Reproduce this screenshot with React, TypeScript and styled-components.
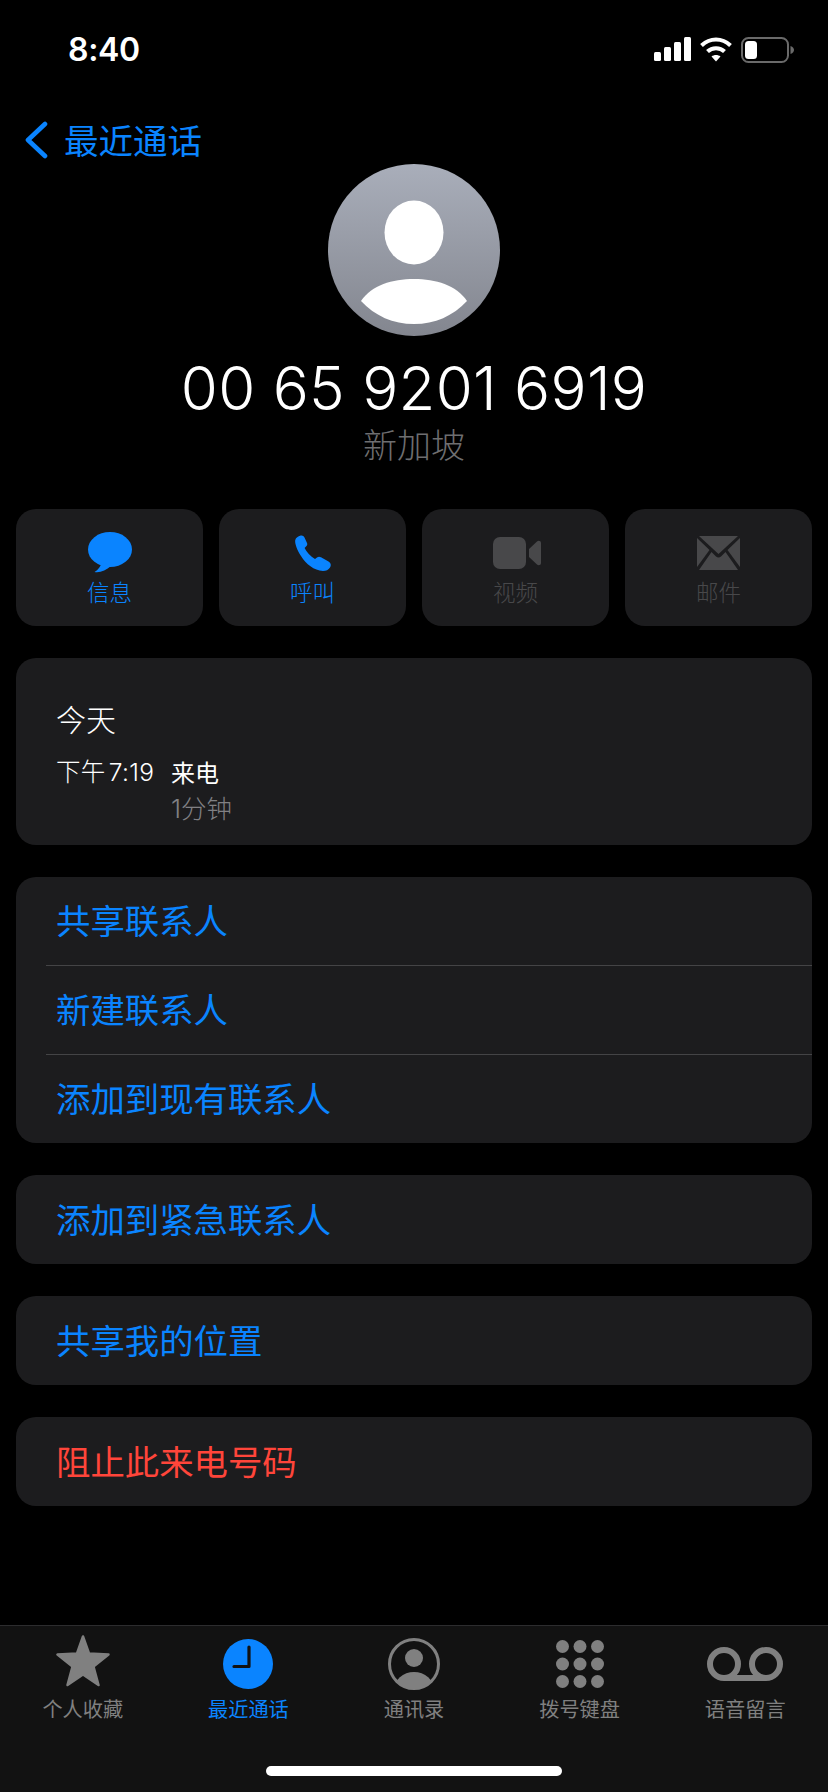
import React from "react";
import styled, { createGlobalStyle } from "styled-components";

const Global = createGlobalStyle`
  html, body { margin: 0; padding: 0; background: #000; }
  body { font-family: Inter, "Noto Sans CJK SC", sans-serif; }
  * { box-sizing: border-box; }
`;

const Page = styled.div`
  width: 828px;
  height: 1792px;
  background: #000;
  display: flex;
  flex-direction: column;
  overflow: hidden;
`;

const StatusBar = styled.div`
  height: 100px;
  padding: 37px 34px 0 68px;
  display: flex;
  align-items: flex-start;
  justify-content: space-between;
`;

const Time = styled.div`
  color: #fff;
  font: 600 32px/25px Inter, sans-serif;
  letter-spacing: -0.3px;
`;

const StatusIcons = styled.div`
  display: flex;
  align-items: flex-start;
  gap: 9px;
`;

const NavBar = styled.div`
  height: 64px;
  padding: 21px 0 0 24px;
  display: flex;
  align-items: flex-start;
  gap: 16px;
`;

const BackLabel = styled.span`
  color: #0a84ff;
  font: 400 34.5px/36px "Noto Sans CJK SC", sans-serif;
`;

const Hero = styled.div`
  display: flex;
  flex-direction: column;
  align-items: center;
`;

const Avatar = styled.svg`
  display: block;
  width: 172px;
  height: 172px;
`;

const PhoneNumber = styled.div`
  margin-top: 22px;
  color: #fff;
  font: 300 60px/60px Inter, sans-serif;
  letter-spacing: 0.3px;
`;

const Region = styled.div`
  margin-top: 6px;
  color: #6e6e70;
  font: 300 34px/40px "Noto Sans CJK SC", sans-serif;
`;

const Content = styled.div`
  padding: 0 16px;
  display: flex;
  flex-direction: column;
  gap: 32px;
  margin-top: 45px;
`;

const Actions = styled.div`
  display: grid;
  grid-template-columns: repeat(4, 187px);
  gap: 16px;
`;

const Action = styled.div<{ $on?: boolean }>`
  height: 117px;
  border-radius: 20px;
  background: #1c1c1e;
  display: flex;
  flex-direction: column;
  align-items: center;
  color: ${(p) => (p.$on ? "#0a84ff" : "#48484a")};
`;

const ActionIcon = styled.div<{ $nudge?: number }>`
  height: 67px;
  display: flex;
  align-items: center;
  justify-content: center;
  padding-top: 20px;
  padding-left: ${(p) => p.$nudge ?? 0}px;
`;

const ActionLabel = styled.span`
  font: 300 22.5px/30px "Noto Sans CJK SC", sans-serif;
`;

const Card = styled.div`
  background: #1c1c1e;
  border-radius: 20px;
  overflow: hidden;
`;

const LogCard = styled(Card)`
  height: 187px;
  padding: 40px 40px 0;
`;

const LogDay = styled.div`
  color: #fff;
  font: 300 30px/40px "Noto Sans CJK SC", sans-serif;
  margin-bottom: 16px;
`;

const LogRow = styled.div`
  display: grid;
  grid-template-columns: 115px 1fr;
`;

const LogTime = styled.div`
  color: #fff;
  font: 300 24.5px/36px Inter, "Noto Sans CJK SC", sans-serif;
  white-space: nowrap;
  word-spacing: -4px;
  letter-spacing: 0.3px;
`;

const LogKind = styled.div`
  color: #fff;
  font: 400 24px/35px "Noto Sans CJK SC", sans-serif;
`;

const LogLength = styled.div`
  grid-column: 2;
  color: #808084;
  font: 300 25.5px/37px Inter, "Noto Sans CJK SC", sans-serif;
`;

const Row = styled.div`
  padding-left: 30px;
`;

const RowInner = styled.div<{ $sep?: boolean; $lead?: boolean; $danger?: boolean }>`
  height: ${(p) => (p.$lead ? "88px" : "89px")};
  padding: 0 0 4px 10px;
  display: flex;
  align-items: center;
  border-top: ${(p) => (p.$sep ? "1px solid #444446" : "none")};
  color: ${(p) => (p.$danger ? "#ff453a" : "#0a84ff")};
  font: 400 34.4px/40px "Noto Sans CJK SC", sans-serif;
`;

const TabBar = styled.div`
  margin-top: auto;
  height: 167px;
  background: #121212;
  border-top: 1px solid #2c2c2e;
  display: grid;
  grid-template-columns: repeat(5, 1fr);
  position: relative;
`;

const Tab = styled.div<{ $on?: boolean }>`
  display: flex;
  flex-direction: column;
  align-items: center;
  color: ${(p) => (p.$on ? "#0a84ff" : "#808080")};
`;

const TabIcon = styled.div<{ $top: number }>`
  height: 70px;
  padding-top: ${(p) => p.$top}px;
  display: flex;
  align-items: flex-start;
  justify-content: center;
`;

const TabLabel = styled.span`
  font: 400 20.2px/26px "Noto Sans CJK SC", sans-serif;
`;

const HomeIndicator = styled.div`
  position: absolute;
  left: 266px;
  bottom: 16px;
  width: 296px;
  height: 10px;
  border-radius: 5px;
  background: #fff;
`;

const Back = () => (
  <svg width="24" height="38" viewBox="0 0 24 38" fill="none">
    <path d="M21 3 L4 19 L21 35" stroke="#0a84ff" strokeWidth="4.6" strokeLinecap="round" strokeLinejoin="round" />
  </svg>
);

const Signal = () => (
  <svg width="37" height="24" viewBox="0 0 37 24" fill="#fff">
    <rect x="0" y="15" width="7" height="9" rx="1.5" />
    <rect x="10" y="10" width="7" height="14" rx="1.5" />
    <rect x="20" y="5" width="7" height="19" rx="1.5" />
    <rect x="30" y="0" width="7" height="24" rx="1.5" />
  </svg>
);

const Wifi = () => (
  <svg width="32" height="25" viewBox="0 0 32 25" fill="none" stroke="#fff" strokeWidth="4">
    <path d="M1.5 8.5 C10 .5 22 .5 30.5 8.5" />
    <path d="M7.5 14.5 C12 10 20 10 24.5 14.5" />
    <path d="M16 24.5 L11.5 19.5 C14 17.5 18 17.5 20.5 19.5 Z" fill="#fff" stroke="none" />
  </svg>
);

const Battery = () => (
  <svg width="53" height="26" viewBox="0 0 53 26" fill="none">
    <rect x="1" y="1" width="46" height="24" rx="6.5" stroke="#6a6a6a" strokeWidth="2" />
    <rect x="4" y="4" width="12" height="18" rx="3.5" fill="#fff" />
    <path d="M49.5 9 C52 10 53 11.5 53 13 C53 14.5 52 16 49.5 17 Z" fill="#6a6a6a" />
  </svg>
);

const AvatarArt = () => (
  <Avatar viewBox="0 0 172 172">
    <defs>
      <linearGradient id="avatarFill" x1="0" y1="0" x2="0" y2="1">
        <stop offset="0" stopColor="#a9aeba" />
        <stop offset="1" stopColor="#83868f" />
      </linearGradient>
    </defs>
    <circle cx="86" cy="86" r="86" fill="url(#avatarFill)" />
    <ellipse cx="86" cy="68.5" rx="29.5" ry="32" fill="#fff" />
    <path d="M33 137 C44 121 64 115 86 115 C108 115 128 121 139 137 C125 152 107 160 86 160 C65 160 47 152 33 137 Z" fill="#fff" />
  </Avatar>
);

const Bubble = () => (
  <svg width="44" height="41" viewBox="0 0 44 41" fill="currentColor">
    <ellipse cx="22" cy="17.5" rx="22" ry="17.5" />
    <path d="M14 30 C13 34 10 38 6.5 40 C12 41 18 38.5 23 34 Z" />
  </svg>
);

const Handset = () => (
  <svg width="36" height="36" viewBox="0 0 36 36" fill="currentColor">
    <path d="M5 .8 C7 0 8.6 .6 9.5 2.5 L12 8 C12.6 9.5 12 10.6 11 11.5 L9.6 13 C11.5 17 15.5 21.5 20 24 L22 22.5 C23.3 21.5 24.5 21.5 26 22.3 L33.5 26.5 C35.7 28 36.5 30 35 32.5 C33.5 35 31 36 28 36 C19 35.5 11 29 6 21 C2 15 -.5 8 .3 5 C.8 3 2.5 1.6 5 .8 Z" />
  </svg>
);

const Camera = () => (
  <svg width="48" height="32" viewBox="0 0 48 32" fill="currentColor">
    <rect x="0" y="0" width="33" height="32" rx="7" />
    <path d="M36 12 L44 4.5 C45.5 3 48 3.8 48 6 L48 26 C48 28.2 45.5 29 44 27.5 L36 20 Z" />
  </svg>
);

const Envelope = () => (
  <svg width="43" height="34" viewBox="0 0 43 34">
    <path d="M2 0 H41 L21.5 18 Z" fill="currentColor" />
    <path d="M0 2 L12.5 14 L0 31 Z" fill="currentColor" />
    <path d="M43 2 L30.5 14 L43 31 Z" fill="currentColor" />
    <path d="M2 34 L14.5 16 L19 20.5 C20.5 21.8 22.5 21.8 24 20.5 L28.5 16 L41 34 Z" fill="currentColor" />
  </svg>
);

const Star = () => (
  <svg width="54" height="52" viewBox="0 0 54 52" fill="currentColor" stroke="currentColor" strokeWidth="2.5" strokeLinejoin="round">
    <path d="M27 1.5 L33 18.5 L52.5 19.5 L37.5 31.5 L42.5 50 L27 39.5 L11.5 50 L16.5 31.5 L1.5 19.5 L21 18.5 Z" />
  </svg>
);

const Clock = () => (
  <svg width="50" height="50" viewBox="0 0 50 50">
    <circle cx="25" cy="25" r="25" fill="currentColor" />
    <path d="M26 8 V27.5 H11" fill="none" stroke="#121212" strokeWidth="3.2" strokeLinecap="round" strokeLinejoin="round" />
  </svg>
);

const Person = () => (
  <svg width="52" height="52" viewBox="0 0 52 52" fill="currentColor">
    <defs>
      <clipPath id="personClip">
        <circle cx="26" cy="26" r="24" />
      </clipPath>
    </defs>
    <circle cx="26" cy="26" r="24.5" fill="none" stroke="currentColor" strokeWidth="3" />
    <circle cx="26" cy="20" r="9" />
    <ellipse cx="26" cy="52" rx="20" ry="18" clipPath="url(#personClip)" />
  </svg>
);

const Keypad = () => (
  <svg width="48" height="48" viewBox="0 0 48 48" fill="currentColor">
    {[6.5, 24, 41.5].map((cy) =>
      [6.5, 24, 41.5].map((cx) => <circle key={`${cx}-${cy}`} cx={cx} cy={cy} r="6.5" />)
    )}
  </svg>
);

const Voicemail = () => (
  <svg width="76" height="34" viewBox="0 0 76 34" fill="none" stroke="currentColor" strokeWidth="6">
    <circle cx="17" cy="17" r="14" />
    <circle cx="59" cy="17" r="14" />
    <path d="M17 31 H59" />
  </svg>
);

const actions = [
  { label: "信息", on: true, icon: <Bubble />, nudge: 0 },
  { label: "呼叫", on: true, icon: <Handset />, nudge: 0 },
  { label: "视频", on: false, icon: <Camera />, nudge: 3 },
  { label: "邮件", on: false, icon: <Envelope />, nudge: 0 },
];

const tabs = [
  { label: "个人收藏", icon: <Star />, top: 9 },
  { label: "最近通话", icon: <Clock />, top: 13, on: true },
  { label: "通讯录", icon: <Person />, top: 12 },
  { label: "拨号键盘", icon: <Keypad />, top: 14 },
  { label: "语音留言", icon: <Voicemail />, top: 21 },
];

export default function App() {
  return (
    <Page>
      <Global />
      <StatusBar>
        <Time>8:40</Time>
        <StatusIcons>
          <Signal />
          <Wifi />
          <Battery />
        </StatusIcons>
      </StatusBar>
      <NavBar>
        <Back />
        <BackLabel>最近通话</BackLabel>
      </NavBar>
      <Hero>
        <AvatarArt />
        <PhoneNumber>00 65 9201 6919</PhoneNumber>
        <Region>新加坡</Region>
      </Hero>
      <Content>
        <Actions>
          {actions.map((a) => (
            <Action key={a.label} $on={a.on}>
              <ActionIcon $nudge={a.nudge}>{a.icon}</ActionIcon>
              <ActionLabel>{a.label}</ActionLabel>
            </Action>
          ))}
        </Actions>
        <LogCard>
          <LogDay>今天</LogDay>
          <LogRow>
            <LogTime>下午 7:19</LogTime>
            <LogKind>来电</LogKind>
            <LogLength>1分钟</LogLength>
          </LogRow>
        </LogCard>
        <Card>
          <Row><RowInner $lead>共享联系人</RowInner></Row>
          <Row><RowInner $sep>新建联系人</RowInner></Row>
          <Row><RowInner $sep>添加到现有联系人</RowInner></Row>
        </Card>
        <Card>
          <Row><RowInner>添加到紧急联系人</RowInner></Row>
        </Card>
        <Card>
          <Row><RowInner>共享我的位置</RowInner></Row>
        </Card>
        <Card>
          <Row><RowInner $danger>阻止此来电号码</RowInner></Row>
        </Card>
      </Content>
      <TabBar>
        {tabs.map((t) => (
          <Tab key={t.label} $on={t.on}>
            <TabIcon $top={t.top}>{t.icon}</TabIcon>
            <TabLabel>{t.label}</TabLabel>
          </Tab>
        ))}
        <HomeIndicator />
      </TabBar>
    </Page>
  );
}
